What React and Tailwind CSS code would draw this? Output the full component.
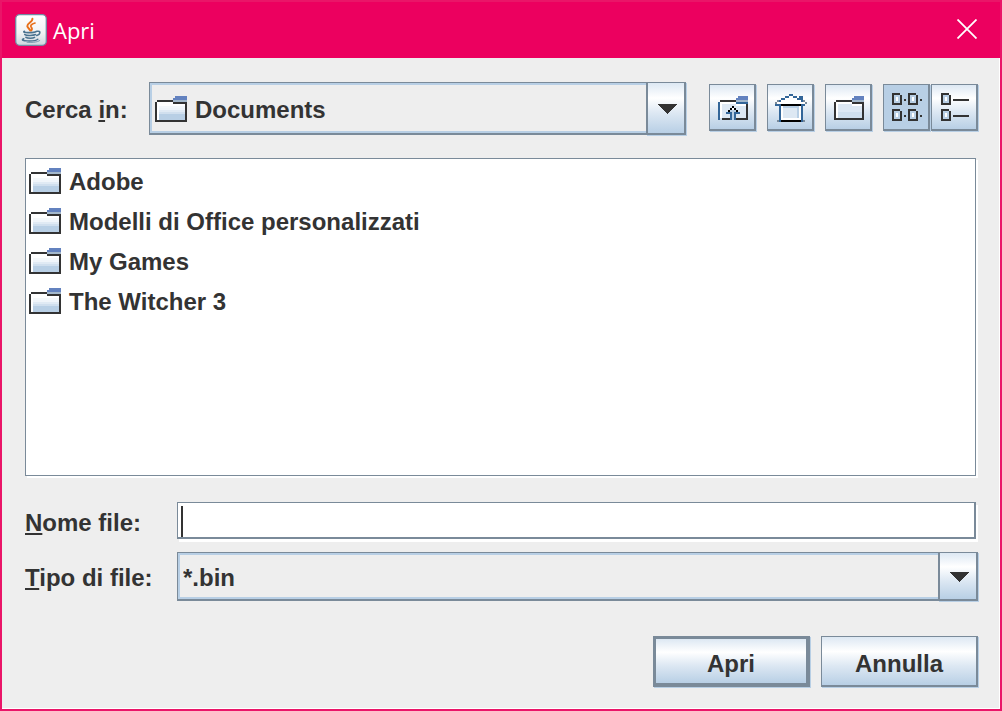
import { useState } from "react";

const folders = ["Adobe", "Modelli di Office personalizzati", "My Games", "The Witcher 3"];

const metal =
  "bg-[linear-gradient(180deg,#dde8f3_0%,#ffffff_30%,#dde8f3_60%,#b8cfe5_100%)] border-[#7a8a99] shadow-[1px_1px_0_#b8cfe5]";

const DARK = "#333333";
const BLUE = "#6382bf";
const PALE = "#b8cfe5";
const DEEP = "#336699";

function Pixels({ w, h, cells }) {
  return (
    <svg
      width={w * 2}
      height={h * 2}
      viewBox={`0 0 ${w} ${h}`}
      shapeRendering="crispEdges"
      className="block shrink-0"
      aria-hidden="true"
    >
      {cells.map(([x, y, cw, ch, fill], i) => (
        <rect key={i} x={x} y={y} width={cw} height={ch} fill={fill} />
      ))}
    </svg>
  );
}

const folderCells = [
  [1, 3, 14, 9, "#ffffff"],
  [2, 5, 13, 1, "#f4f8fb"],
  [2, 6, 13, 1, "#f0f5fa"],
  [2, 7, 13, 1, "#e0eaf4"],
  [2, 8, 13, 1, "#d0dfee"],
  [2, 9, 13, 3, PALE],
  [1, 2, 8, 1, DARK],
  [0, 3, 1, 10, DARK],
  [15, 3, 1, 10, DARK],
  [0, 12, 16, 1, DARK],
  [9, 3, 7, 1, DARK],
  [10, 0, 6, 1, BLUE],
  [9, 1, 7, 1, BLUE],
  [9, 2, 7, 1, "#a3b8cc"],
];

const newFolderCells = [
  [1, 3, 13, 8, "#ffffff"],
  [2, 4, 7, 7, "#dde8f3"],
  [9, 5, 5, 6, "#dde8f3"],
  [2, 8, 12, 3, "#d0dfed"],
  [1, 2, 8, 1, DARK],
  [0, 3, 1, 9, DARK],
  [14, 3, 1, 9, DARK],
  [0, 11, 15, 1, DARK],
  [9, 3, 6, 1, DARK],
  [10, 0, 5, 1, BLUE],
  [9, 1, 6, 1, BLUE],
  [9, 2, 6, 1, "#a3b8cc"],
];

const upFolderCells = [
  [1, 3, 13, 8, "#ffffff"],
  [2, 4, 7, 7, "#dde8f3"],
  [9, 5, 5, 6, "#dde8f3"],
  [1, 2, 8, 1, DARK],
  [0, 3, 1, 9, DEEP],
  [14, 4, 1, 8, DARK],
  [2, 11, 13, 1, DARK],
  [10, 0, 5, 1, BLUE],
  [9, 1, 6, 1, BLUE],
  [9, 2, 6, 1, "#a3b8cc"],
  [9, 3, 6, 1, DEEP],
  [7, 5, 1, 1, "#000000"],
  [6, 6, 1, 1, "#000000"],
  [8, 6, 1, 1, "#000000"],
  [5, 7, 1, 1, "#000000"],
  [9, 7, 1, 1, "#000000"],
  [7, 6, 1, 1, "#ffffff"],
  [6, 7, 3, 1, PALE],
  [4, 8, 3, 1, DEEP],
  [8, 8, 3, 1, DEEP],
  [6, 9, 1, 3, DEEP],
  [8, 9, 1, 3, DEEP],
  [7, 8, 1, 4, PALE],
];

const homeCells = [
  [7, 1, 2, 1, "#ffffff"],
  [5, 2, 7, 1, "#ffffff"],
  [3, 3, 10, 1, "#ffffff"],
  [1, 4, 14, 1, "#ffffff"],
  [3, 6, 10, 7, "#ffffff"],
  [4, 6, 8, 6, "#dde8f3"],
  [4, 6, 8, 1, PALE],
  [11, 6, 1, 6, PALE],
  [7, 0, 2, 1, DEEP],
  [5, 1, 2, 1, DEEP],
  [9, 1, 2, 1, DEEP],
  [12, 1, 2, 2, DEEP],
  [3, 2, 2, 1, DEEP],
  [11, 2, 2, 1, DEEP],
  [1, 3, 1, 1, "#7a8a99"],
  [2, 3, 1, 1, DEEP],
  [13, 3, 1, 1, DEEP],
  [14, 3, 1, 1, "#7a8a99"],
  [0, 4, 1, 1, "#7a8a99"],
  [15, 4, 1, 1, "#7a8a99"],
  [0, 5, 3, 1, DEEP],
  [3, 5, 10, 1, "#000000"],
  [13, 5, 2, 1, DEEP],
  [2, 6, 1, 8, DEEP],
  [13, 6, 1, 8, DEEP],
  [1, 13, 1, 1, "#7a8a99"],
  [14, 13, 1, 1, "#7a8a99"],
  [3, 13, 10, 1, "#000000"],
];

const box = (x, y) => [
  [x, y, 4, 1, DARK],
  [x, y, 1, 6, DARK],
  [x + 4, y + 1, 1, 5, DARK],
  [x, y + 5, 5, 1, DARK],
  [x + 1, y + 1, 3, 4, PALE],
  [x + 2, y + 2, 1, 2, "#ffffff"],
];

const gridCells = [
  ...box(0, 0), ...box(8, 0), ...box(0, 8), ...box(8, 8),
  [6, 3, 1, 1, DARK], [14, 3, 1, 1, DARK], [6, 11, 1, 1, DARK], [14, 11, 1, 1, DARK],
];

const detailCells = [
  ...box(0, 0), ...box(0, 8),
  [6, 3, 8, 1, DARK], [6, 11, 8, 1, DARK],
];

function JavaIcon() {
  return (
    <svg width="32" height="32" viewBox="0 0 32 32" className="block" aria-hidden="true">
      <defs>
        <linearGradient id="tile" x1="0" y1="0" x2="0" y2="1">
          <stop offset="0" stopColor="#ffffff" />
          <stop offset="0.6" stopColor="#f0f2f4" />
          <stop offset="1" stopColor="#cdd6de" />
        </linearGradient>
      </defs>
      <rect x="0.7" y="0.7" width="30.6" height="30.6" rx="4" fill="url(#tile)" stroke="#6f8ca3" strokeWidth="1.3" />
      <g fill="none" strokeLinecap="round">
        <path d="M17.4 4.8C18 8 12 8.800 12.300 12.200C12.500 14 14.800 14.800 15.200 16.500" stroke="#e8701a" strokeWidth="2" />
        <path d="M20 9C16.500 10 14.800 11.700 16.300 13.300C17.300 14.400 17.200 15.600 16.300 16.600" stroke="#e8701a" strokeWidth="1.700" />
        <path d="M9.500 17.300C5.500 18.900 18.500 19.200 21.300 17.500" stroke="#4b738f" strokeWidth="1.600" />
        <path d="M9.800 20.500C11 21.800 18.500 21.800 20.500 20.600M11 23.300C12.500 24.600 18 24.500 19.500 23.400" stroke="#4b738f" strokeWidth="1.700" />
        <path d="M22 17.300C26.300 16.500 25.300 20.600 21.800 21.500" stroke="#4b738f" strokeWidth="1.600" />
        <path d="M8.800 24.800C2.500 27.200 20 27.800 22.800 25.200" stroke="#4b738f" strokeWidth="1.500" />
        <path d="M12 28.300C16 28.800 22 28.500 24.800 26.600" stroke="#7f9db2" strokeWidth="1" />
      </g>
    </svg>
  );
}

function Combo({ id, options, icon, size }) {
  return (
    <div className="grid min-w-0 flex-1">
      <select
        id={id}
        className={`col-start-1 row-start-1 w-full appearance-none border-t border-l border-r-2 border-b-2 border-[#7a8a99] bg-[#eeeeee] pt-1 pr-12 font-bold text-[#333333] shadow-[inset_0_0_0_2px_#b8cfe5] outline-none ${size}`}
      >
        {options.map((o) => (
          <option key={o}>{o}</option>
        ))}
      </select>
      {icon && (
        <span className="pointer-events-none col-start-1 row-start-1 self-center justify-self-start pl-1.5">
          {icon}
        </span>
      )}
      <span
        className={`pointer-events-none col-start-1 row-start-1 flex w-10 items-center justify-center justify-self-end border-t border-r-2 border-b-2 border-l-2 pt-0.5 pl-0.5 ${metal}`}
      >
        <svg width="20" height="10" viewBox="0 0 20 10" shapeRendering="crispEdges" aria-hidden="true">
          <path d="M0 0H20L10 10Z" fill={DARK} />
        </svg>
      </span>
    </div>
  );
}

function ToolButton({ label, pressed, onClick, children }) {
  const toggle = pressed !== undefined;
  return (
    <button
      type="button"
      aria-label={label}
      aria-pressed={pressed}
      onClick={onClick}
      className={`flex size-[47px] items-center justify-center border-t border-r-2 border-b-2 border-l ${
        toggle ? "pl-px" : "pt-0.5 pl-px"
      } ${pressed ? "border-[#7a8a99] bg-[#b8cfe5] shadow-[1px_1px_0_#b8cfe5]" : metal}`}
    >
      {children}
    </button>
  );
}

const mnemonic = "underline decoration-2 underline-offset-2";

export default function App() {
  const [view, setView] = useState("list");
  return (
    <div className="flex min-h-screen flex-col border-2 border-[#ea1568] bg-[#eeeeee] font-['Liberation_Sans',Arial,sans-serif] text-2xl font-bold text-[#333333]">
      <header className="flex h-14 items-center bg-[#ec005f] pr-[23px] pl-[13px]">
        <JavaIcon />
        <h1 className="flex-1 pt-0.5 pl-1.5 font-['Open_Sans','Noto_Sans',sans-serif] text-[22px] font-normal text-white">
          Apri
        </h1>
        <button type="button" aria-label="Chiudi" className="pb-0.5">
          <svg width="20" height="20" viewBox="0 0 20 20" className="block" aria-hidden="true">
            <path d="M0.500 0.500L19.500 19.500M19.500 0.500L0.500 19.500" stroke="#ffffff" strokeWidth="1.800" />
          </svg>
        </button>
      </header>

      <main className="flex flex-1 flex-col border-r border-b border-white pt-6 pr-[21px] pb-[21px] pl-[23px]">
        <div className="flex items-center">
          <label htmlFor="dir" className="w-[124px] pt-0.5">
            Cerca <span className={mnemonic}>i</span>n:
          </label>
          <Combo
            id="dir"
            options={["Documents"]}
            size="h-[53px] pl-[45px]"
            icon={<Pixels w={16} h={13} cells={folderCells} />}
          />
          <div className="ml-[23px] flex gap-[11px] pb-0.5">
            <ToolButton label="Su di un livello">
              <Pixels w={15} h={12} cells={upFolderCells} />
            </ToolButton>
            <ToolButton label="Home">
              <Pixels w={16} h={14} cells={homeCells} />
            </ToolButton>
            <ToolButton label="Crea nuova cartella">
              <Pixels w={15} h={12} cells={newFolderCells} />
            </ToolButton>
            <div className="flex gap-px">
              <ToolButton label="Elenco" pressed={view === "list"} onClick={() => setView("list")}>
                <Pixels w={15} h={14} cells={gridCells} />
              </ToolButton>
              <ToolButton label="Dettagli" pressed={view === "details"} onClick={() => setView("details")}>
                <Pixels w={14} h={14} cells={detailCells} />
              </ToolButton>
            </div>
          </div>
        </div>

        <ul className="mt-[23px] mr-0.5 flex-1 border border-[#7a8a99] bg-white pt-0.5 pl-[3px] shadow-[2px_2px_0_#ffffff]">
          {folders.map((name) => (
            <li key={name} className="flex h-10 items-center gap-2">
              <Pixels w={16} h={13} cells={folderCells} />
              <span className="pt-0.5">{name}</span>
            </li>
          ))}
        </ul>

        <div className="mt-[25px] flex items-center">
          <label htmlFor="name" className="w-[152px] pt-1.5">
            <span className={mnemonic}>N</span>ome file:
          </label>
          <div className="relative mr-0.5 flex-1">
            <input
              id="name"
              type="text"
              className="block h-[37px] w-full border-t border-r-2 border-b-2 border-l border-[#7a8a99] bg-white px-1 caret-transparent shadow-[2px_3px_0_#ffffff] outline-none"
            />
            <span className="pointer-events-none absolute top-1 bottom-0.5 left-1 w-0.5 bg-[#333333]" />
          </div>
        </div>

        <div className="mt-[13px] flex items-center">
          <label htmlFor="type" className="w-[152px] pt-0.5">
            <span className={mnemonic}>T</span>ipo di file:
          </label>
          <Combo id="type" options={["*.bin"]} size="h-[49px] pl-[5px]" />
        </div>

        <div className="mt-[35px] flex justify-end gap-[11px]">
          <button type="button" className={`h-[51px] w-[157px] border-t-3 border-r-4 border-b-4 border-l-3 pt-1.5 ${metal}`}>
            Apri
          </button>
          <button type="button" className={`h-[51px] w-[157px] border-t border-r-2 border-b-2 border-l pt-1.5 ${metal}`}>
            Annulla
          </button>
        </div>
      </main>
    </div>
  );
}
